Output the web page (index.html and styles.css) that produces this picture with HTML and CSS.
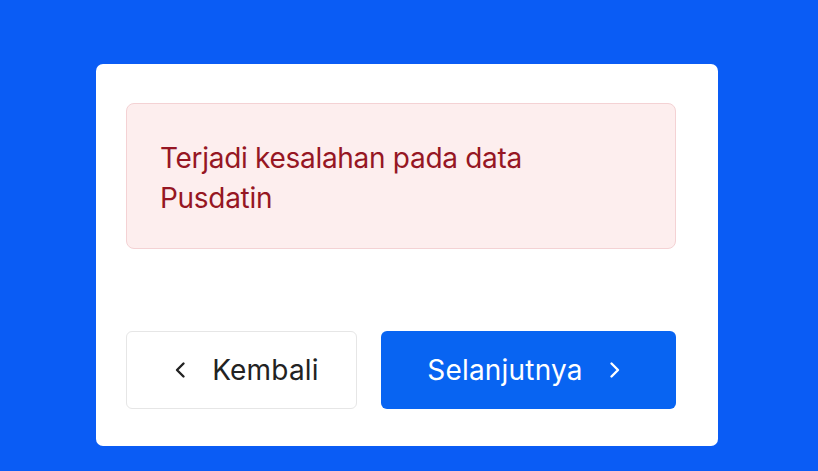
FILE: index.html
```html
<!DOCTYPE html>
<html lang="id">
<head>
<meta charset="utf-8">
<title>Error</title>
<link rel="stylesheet" href="styles.css">
</head>
<body>
<div class="page">
  <div class="card">
    <div class="alert">
      <p class="alert-text">Terjadi kesalahan pada data<br>Pusdatin</p>
    </div>
    <div class="actions">
      <button class="btn btn-back">
        <svg class="chev" width="14" height="20" viewBox="0 0 14 20"><path d="M10.5 3.5 L4 10 L10.5 16.5" fill="none" stroke="#222" stroke-width="2.4" stroke-linecap="round" stroke-linejoin="round"/></svg>
        <span>Kembali</span>
      </button>
      <button class="btn btn-next">
        <span>Selanjutnya</span>
        <svg class="chev" width="14" height="20" viewBox="0 0 14 20"><path d="M3.5 3.5 L10 10 L3.5 16.5" fill="none" stroke="#fff" stroke-width="2.4" stroke-linecap="round" stroke-linejoin="round"/></svg>
      </button>
    </div>
  </div>
</div>
</body>
</html>
```
FILE: styles.css
```css
html, body {
  margin: 0;
  padding: 0;
  background: #0a5cf5;
  font-family: "Inter", "Noto Sans", sans-serif;
}
.page {
  width: 818px;
  height: 471px;
  padding: 64px 0 0 96px;
  box-sizing: border-box;
}
.card {
  width: 622px;
  height: 382px;
  box-sizing: border-box;
  background: #fff;
  border-radius: 7px;
  padding: 39px 42px 37px 30px;
  display: flex;
  flex-direction: column;
}
.alert {
  height: 146px;
  box-sizing: border-box;
  background: #fdeeee;
  border: 1.5px solid #f4d2d4;
  border-radius: 8px;
  padding: 34px 0 0 33px;
}
.alert-text {
  margin: 0;
  color: #961623;
  font-size: 28px;
  line-height: 40px;
  letter-spacing: -0.3px;
}
.actions {
  margin-top: 82px;
  display: flex;
  gap: 24px;
  height: 78px;
}
.btn {
  font-family: inherit;
  font-size: 28px;
  border-radius: 6px;
  display: flex;
  align-items: center;
  justify-content: center;
  gap: 25px;
  cursor: pointer;
  padding: 0;
  letter-spacing: 0.2px;
}
.btn-back {
  width: 231px;
  background: #fff;
  border: 1.5px solid #e6e6e6;
  color: #222;
  padding-left: 9px;
}
.btn-next {
  width: 295px;
  background: #0864f2;
  border: none;
  color: #fff;
  padding-right: 8px;
}
.chev {
  display: block;
}
```
